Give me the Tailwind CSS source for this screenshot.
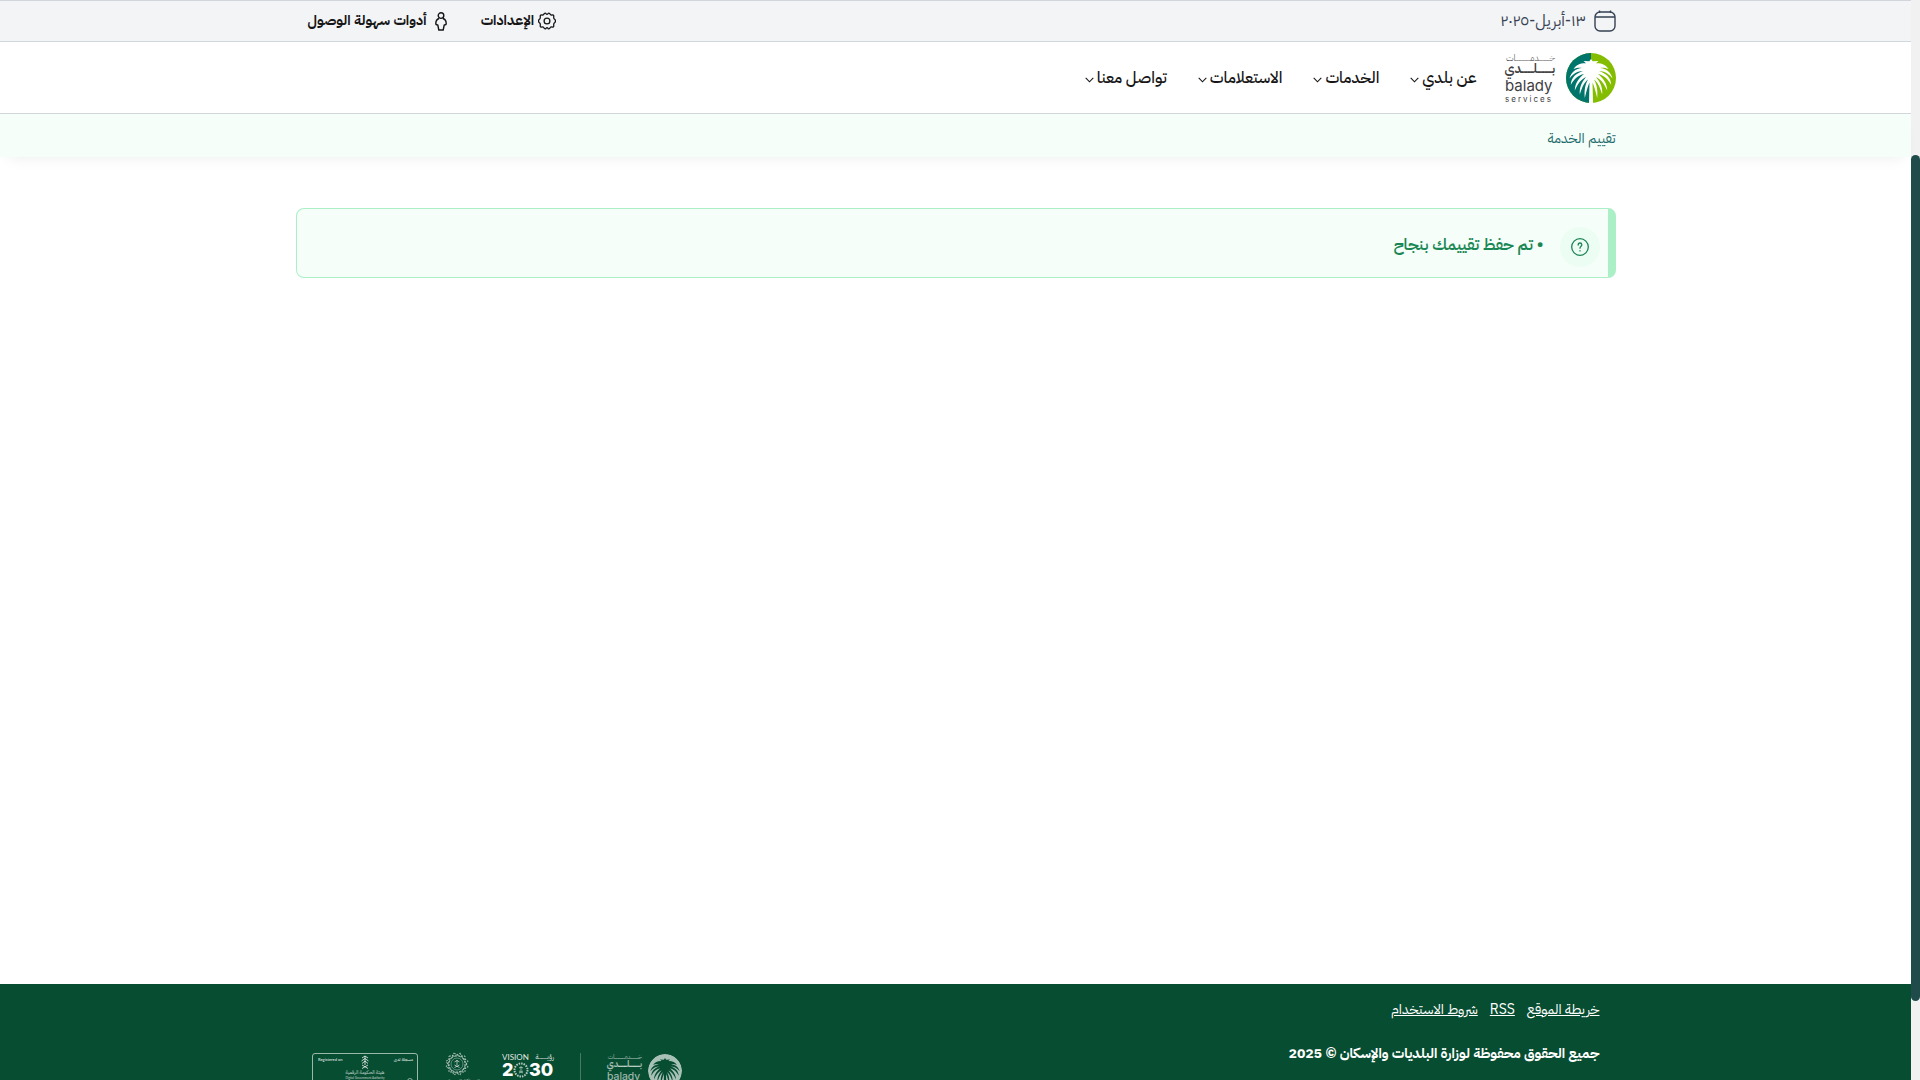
<!DOCTYPE html>
<html lang="ar" dir="rtl">
  <head>
    <meta charset="UTF-8" />
    <title>بلدي | تقييم الخدمة</title>
    <meta name="viewport" content="width=device-width, initial-scale=1.0" />
    <script src="https://cdn.jsdelivr.net/npm/@tailwindcss/browser@4"></script>
  </head>
  <body class="flex h-screen overflow-hidden bg-white font-['IBM_Plex_Sans_Arabic','Noto_Sans',sans-serif] text-base text-[#161616]">

    <!-- Shared shapes -->
    <svg class="hidden" aria-hidden="true">
      <defs>
        <path id="half-palm" d="M25 6 L23.3 8.3 L17.5 8 L20 10.2 C14 10 10 12 7.5 16 C11 14.6 13.500 14.6 16 15 C10 15.500 5 19 3.500 25.500 C8 20 12 18.200 17 18.300 C10 20 5 25 4.800 32 C8 26 12 22.200 18 21 C13 25 9 30 8.800 37.500 C12 30.500 15 26.500 20 24 C16 29 13.200 34 13.800 41.500 C16 34.500 18 29.500 22 26.500 C19.500 31 18 36 18.800 45 C20.500 38 21.800 33 23.500 29.500 L23 50 L25.300 50 Z" />
        <symbol id="chevron" viewBox="0 0 9 6">
          <path d="M.7 .8 L4.500 4.800 L8.300 .8" fill="none" stroke="currentColor" stroke-width="1.100" />
        </symbol>
        <symbol id="wordmark" viewBox="0 0 50 50" overflow="visible">
          <g fill="currentColor" direction="rtl" font-family="IBM Plex Sans Arabic, Noto Sans, sans-serif">
            <text x="50" y="8" font-size="9" font-weight="300">خـــــــــــدمـــــــــــــــات</text>
            <text x="50" y="20" font-size="13" font-weight="600">بــــــــــلــــــــدي</text>
          </g>
          <g fill="currentColor" direction="ltr">
            <text x="0" y="38" font-size="15" font-family="Inter, sans-serif">balady</text>
            <text x="0" y="49" font-size="8" letter-spacing="2" font-family="Inter, sans-serif">services</text>
          </g>
        </symbol>
      </defs>
    </svg>

    <!-- Scroll track -->
    <div class="flex w-[9px] shrink-0 bg-[#f1f1f1] pt-[155px] pb-[79px]">
      <div class="flex-1 rounded-full bg-[#204b4b]"></div>
    </div>

    <div class="flex min-w-0 flex-1 flex-col">

      <!-- Top bar -->
      <div class="h-[42px] shrink-0 border-y border-gray-300 bg-gray-100">
        <div class="mx-auto flex h-full max-w-[1320px] items-center justify-between">
          <div class="flex items-center gap-2 text-gray-700">
            <svg class="size-[22px]" viewBox="0 0 22 22" fill="none" stroke="currentColor" stroke-width="1.400">
              <rect x="1" y="2" width="20" height="19" rx="5" />
              <path d="M1 7H21M5.500 .5V3M16.500 .5V3" />
            </svg>
            <span>١٣-أبريل-٢٠٢٥</span>
          </div>
          <div class="flex items-center gap-[34px] pl-3 text-sm font-bold">
            <button type="button" class="flex items-center gap-1">
              <svg class="size-[18px]" viewBox="0 0 18 18" fill="none" stroke="currentColor" stroke-width="1.300" stroke-linejoin="round">
                <path d="M6.300 1.600 Q7.300 .5 8 1.700 Q9 3 10 1.700 Q10.700 .5 11.700 1.600 Q12.400 3.400 14 3 Q15.600 2.700 15.800 4.200 Q15.400 6 16.300 7 Q17.800 8 17.300 9 Q17.800 10 16.300 11 Q15.400 12 15.800 13.800 Q15.600 15.300 14 15 Q12.400 14.600 11.700 16.400 Q10.700 17.500 10 16.300 Q9 15 8 16.300 Q7.300 17.500 6.300 16.400 Q5.600 14.600 4 15 Q2.400 15.300 2.200 13.800 Q2.600 12 1.700 11 Q.2 10 .7 9 Q.2 8 1.700 7 Q2.600 6 2.200 4.200 Q2.400 2.700 4 3 Q5.600 3.400 6.300 1.600 Z" />
                <circle cx="9" cy="9" r="2.900" />
              </svg>
              الإعدادات
            </button>
            <button type="button" class="flex items-center gap-2">
              <svg class="h-[19px] w-3" viewBox="0 0 12 19" fill="none" stroke="currentColor" stroke-width="1.400" stroke-linejoin="round">
                <circle cx="6" cy="3.600" r="2.800" />
                <path d="M4 6.500 C2 7.200 .8 9 .8 11.500 Q.8 13 2.800 13 L3.800 18 H8.200 L9.200 13 Q11.200 13 11.200 11.500 C11.200 9 10 7.200 8 6.500" />
              </svg>
              أدوات سهولة الوصول
            </button>
          </div>
        </div>
      </div>

      <!-- Main navigation -->
      <header class="h-[72px] shrink-0 border-b border-gray-300">
        <div class="mx-auto flex h-full max-w-[1320px] items-center gap-7">
          <a href="#" class="flex items-center gap-[11px] text-[#414042]" aria-label="بلدي">
            <svg class="size-[50px]" viewBox="0 0 50 50">
              <circle cx="25" cy="25" r="25" fill="#84bd00" />
              <path d="M25 0 A25 25 0 0 0 25 50 Z" fill="#00756c" />
              <g fill="#fff">
                <use href="#half-palm" />
                <use href="#half-palm" transform="translate(50 0) scale(-1 1)" />
              </g>
            </svg>
            <svg class="size-[50px] overflow-visible"><use href="#wordmark" width="50" height="50" /></svg>
          </a>
          <nav class="flex items-center gap-[31px] font-medium">
            <a href="#" class="flex items-center gap-[3px]">عن بلدي <svg class="mt-1 h-[6px] w-[9px]"><use href="#chevron" /></svg></a>
            <a href="#" class="flex items-center gap-[3px]">الخدمات <svg class="mt-1 h-[6px] w-[9px]"><use href="#chevron" /></svg></a>
            <a href="#" class="flex items-center gap-[3px]">الاستعلامات <svg class="mt-1 h-[6px] w-[9px]"><use href="#chevron" /></svg></a>
            <a href="#" class="flex items-center gap-[3px]">تواصل معنا <svg class="mt-1 h-[6px] w-[9px]"><use href="#chevron" /></svg></a>
          </nav>
        </div>
      </header>

      <!-- Breadcrumb -->
      <div class="h-[43px] shrink-0 bg-[#f6fefa] shadow-[0_8px_16px_-8px_rgba(0,0,0,0.08)]">
        <div class="mx-auto flex h-full max-w-[1320px] items-center pt-[6px]">
          <h1 class="text-sm text-[#1b6b6b]">تقييم الخدمة</h1>
        </div>
      </div>

      <!-- Alert -->
      <main class="min-h-0 flex-1 pt-[51px]">
        <div role="alert" class="mx-auto flex h-[70px] max-w-[1320px] items-center gap-4 rounded-lg border border-r-8 border-[#abefc6] bg-[#f6fef9] pr-2 font-semibold text-[#198754]">
          <span class="mt-2 flex size-10 items-center justify-center rounded-full bg-[#ecfdf3] text-[#1b8354]">
            <svg class="size-[18px]" viewBox="0 0 18 18" fill="none" stroke="currentColor" stroke-width="1.300" stroke-linecap="round">
              <circle cx="9" cy="9" r="8.300" />
              <path d="M7.200 7 Q7.200 5 9 5 Q10.800 5 10.800 6.800 Q10.800 7.800 9.800 8.500 Q9 9.100 9 10.200 M9 12.700 V12.900" />
            </svg>
          </span>
          <p class="pt-1">• تم حفظ تقييمك بنجاح</p>
        </div>
      </main>

      <!-- Footer -->
      <footer class="h-24 shrink-0 overflow-hidden bg-[#074d31] text-sm text-white">
        <div class="mx-auto max-w-[1320px] px-4 pt-4">
          <div class="flex gap-3">
            <a href="#" class="underline">خريطة الموقع</a>
            <a href="#" class="underline">RSS</a>
            <a href="#" class="underline">شروط الاستخدام</a>
          </div>
          <div class="flex items-start justify-between pt-6">
            <p class="font-bold">جميع الحقوق محفوظة لوزارة البلديات والإسكان © 2025</p>
            <div class="flex pt-[9px]">
              <svg class="h-9 w-[34px] text-white/65" viewBox="0 0 50 50">
                <mask id="palm-cut">
                  <circle cx="25" cy="25" r="25" fill="#fff" />
                  <use href="#half-palm" />
                  <use href="#half-palm" transform="translate(50 0) scale(-1 1)" />
                </mask>
                <circle cx="25" cy="25" r="25" fill="currentColor" mask="url(#palm-cut)" />
              </svg>
              <svg class="mr-[6px] size-[35px] overflow-visible text-white/65"><use href="#wordmark" width="35" height="35" /></svg>
              <div class="mx-[26px] h-12 w-px bg-white/25"></div>
              <svg class="h-9 w-[52px] overflow-visible" viewBox="0 0 52 36" fill="#fff" font-family="Lato, sans-serif" direction="ltr">
                <text x="0" y="7" font-size="8" fill-opacity=".9">VISION</text>
                <text x="52" y="6" font-size="7" fill-opacity=".9" direction="rtl" font-family="IBM Plex Sans Arabic, sans-serif">رؤيـــــــــــة</text>
                <text x="0" y="23" font-size="18" font-weight="800" font-family="Inter, sans-serif">2</text>
                <text x="27" y="23" font-size="18" font-weight="800" font-family="Inter, sans-serif">30</text>
                <g fill="none" stroke="#fff" stroke-opacity=".7">
                  <circle cx="19" cy="17" r="6.500" stroke-width="2" stroke-dasharray="1.500 1" />
                  <path d="M19 13.500V18M17 15L19 14L21 15M17 20L21 18M21 20L17 18" stroke-width=".8" />
                </g>
                <text x="0" y="30" font-size="4" fill-opacity=".7">KINGDOM OF SAUDI ARABIA</text>
              </svg>
              <svg class="mr-[22px] h-9 w-[46px] overflow-visible" viewBox="0 0 46 36" fill="none" stroke="#fff" stroke-opacity=".6">
                <rect x="15" y="3" width="16" height="16" stroke-dasharray="2 1" />
                <rect x="15" y="3" width="16" height="16" stroke-dasharray="2 1" transform="rotate(30 23 11)" />
                <rect x="15" y="3" width="16" height="16" stroke-dasharray="2 1" transform="rotate(60 23 11)" />
                <circle cx="23" cy="11" r="6" stroke-width=".6" />
                <path d="M23 7V12M20.500 9L23 7.500L25.500 9M20.500 14.500L25.500 12M25.500 14.500L20.500 12" />
                <text x="46" y="30" font-size="6" fill="#fff" fill-opacity=".6" stroke="none" font-family="IBM Plex Sans Arabic, sans-serif">المملكة العربية</text>
              </svg>
              <svg class="mr-4 h-12 w-[106px]" viewBox="0 0 106 48" fill="#fff" fill-opacity=".75" font-family="Lato, sans-serif">
                <rect x=".5" y=".5" width="105" height="46" rx="2.500" fill="none" stroke="#fff" stroke-opacity=".6" />
                <text x="6" y="8" font-size="4" font-weight="700" direction="ltr">Registered on</text>
                <text x="101" y="8" font-size="4" font-weight="700" font-family="IBM Plex Sans Arabic, sans-serif">مسجلة لدى</text>
                <g fill="none" stroke="#fff" stroke-opacity=".75">
                  <path d="M53 3V12M50 5L53 3L56 5M49.500 8L53 5.500L56.500 8M50 10.500L53 8L56 10.500M50 15.500L56 12M56 15.500L50 12" />
                  <circle cx="98" cy="28" r="2.500" stroke-width=".7" />
                </g>
                <text x="53" y="21" font-size="5" text-anchor="middle" font-family="IBM Plex Sans Arabic, sans-serif">هيئة الحكومة الرقمية</text>
                <text x="53" y="26" font-size="3" text-anchor="middle" direction="ltr">Digital Government Authority</text>
              </svg>
            </div>
          </div>
        </div>
      </footer>
    </div>
  </body>
</html>
